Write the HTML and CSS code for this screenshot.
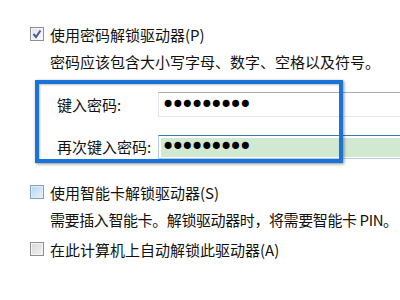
FILE: index.html
```html
<!DOCTYPE html>
<html lang="zh-CN">
<head>
  <meta charset="UTF-8" />
  <title>BitLocker 解锁方式</title>
  <link rel="stylesheet" href="styles.css">
</head>
<body>
  <label class="option">
    <span class="check checked">
      <svg width="10" height="10" viewBox="0 0 10 10"><path d="M1.5 5 L4 8 L8.5 1.5" fill="none" stroke="#4a5c96" stroke-width="2"/></svg>
    </span>
    使用密码解锁驱动器(P)
  </label>
  <p class="desc">密码应该包含大小写字母、数字、空格以及符号。</p>

  <!-- password fields, blue frame drawn over them -->
  <div class="fields">
    <div class="field">
      <span class="field-label">键入密码:</span>
      <input type="password" class="pw" value="123456789" readonly>
    </div>
    <div class="field">
      <span class="field-label">再次键入密码:</span>
      <input type="password" class="pw pw-ok" value="123456789" readonly>
    </div>
  </div>

  <label class="option option-smart">
    <span class="check hover"></span>
    使用智能卡解锁驱动器(S)
  </label>
  <p class="desc desc-tight">需要插入智能卡。解锁驱动器时，将需要智能卡 PIN。</p>

  <label class="option option-auto">
    <span class="check"></span>
    在此计算机上自动解锁此驱动器(A)
  </label>
</body>
</html>
```

FILE: styles.css
```css
body {
  font-family: 'Noto Sans CJK SC', 'Noto Sans', sans-serif;
  font-size: 15px;
  color: #111;
  background: white;
  margin: 0;
  padding: 20px 0 0 0;
  overflow: hidden;
}

.option {
  display: flex;
  align-items: center;
  gap: 6px;
  height: 28px;
  padding-left: 30px;
  white-space: nowrap;
}

.check {
  box-sizing: border-box;
  width: 14px;
  height: 14px;
  border: 1px solid #8e8f8f;
  background: linear-gradient(135deg, #d6d6d6, #f4f4f4);
  box-shadow: inset 0 0 0 1px #f4f4f4;
  display: flex;
  align-items: center;
  justify-content: center;
}

.check.checked {
  background: linear-gradient(135deg, #e2e4ea, #fafafa);
}

.check.hover {
  border-color: #7ea3c6;
  background: linear-gradient(135deg, #b6d4ee, #e8f2fb);
  box-shadow: inset 0 0 0 1px #deecf8;
}

.desc {
  margin: 0;
  height: 28px;
  line-height: 28px;
  padding-left: 50px;
  white-space: nowrap;
}

.desc-tight {
  letter-spacing: -0.4px;
}

.fields {
  position: relative;
  margin: 4px 0 0 35px;
  width: 308px;
  height: 83px;
  box-sizing: border-box;
  padding: 12px 0 0 22px;
  display: flex;
  flex-direction: column;
  gap: 17px;
}

.fields::after {
  content: "";
  position: absolute;
  inset: 0;
  border: 4px solid #1a74d8;
  box-shadow: 1px 1px 3px rgba(0, 0, 0, 0.45), inset 1px 1px 2px rgba(0, 0, 0, 0.25);
  pointer-events: none;
}

.field {
  display: flex;
  align-items: center;
  height: 25px;
}

.field-label {
  width: 101px;
  flex-shrink: 0;
  white-space: nowrap;
}

.pw {
  box-sizing: border-box;
  width: 260px;
  height: 25px;
  flex-shrink: 0;
  margin: 0;
  padding: 0 0 0 2px;
  border: 1px solid #e3e6ec;
  border-top-color: #abadb3;
  background: white;
  font-family: 'DejaVu Sans', sans-serif;
  font-size: 24px;
  letter-spacing: -4.5px;
  color: black;
  outline: none;
}

.pw-ok {
  height: 24px;
  border-color: #b5cfe4;
  border-top-color: #3f7aad;
  background: #d0e9d0;
  box-shadow: inset 0 0 0 1px white, inset 1px 1px 0 1px white;
}

.option-smart {
  margin-top: 15px;
}

.option-auto {
  margin-top: 1px;
}
```
